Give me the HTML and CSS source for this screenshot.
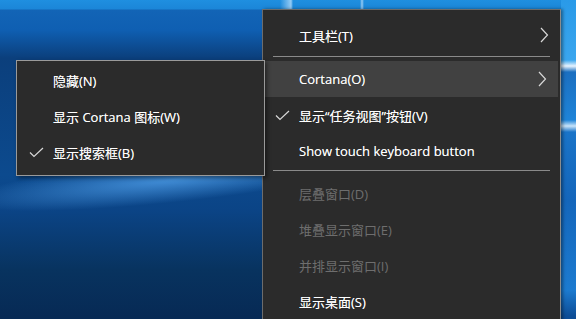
FILE: index.html
```html
<!DOCTYPE html>
<html lang="zh-CN">

<head>
    <meta charset="UTF-8">
    <title>任务栏菜单</title>
    <link rel="stylesheet" href="styles.css">
</head>

<body>
    <div class="desktop">
        <div class="glow"></div>
        <div class="edge"></div>

        <!-- main taskbar menu -->
        <ul class="menu main-menu">
            <li class="item">工具栏(T)
                <svg class="arrow" width="9" height="16" viewBox="0 0 9 16"><path d="M1 1 L7.5 8 L1 15" /></svg>
            </li>
            <li class="sep"></li>
            <li class="item active">Cortana(O)
                <svg class="arrow" width="9" height="16" viewBox="0 0 9 16"><path d="M1 1 L7.5 8 L1 15" /></svg>
            </li>
            <li class="item">
                <svg class="check" width="15" height="11" viewBox="0 0 15 11"><path d="M1 5.5 L5 9.5 L14 1" /></svg>
                显示“任务视图”按钮(V)
            </li>
            <li class="item">Show touch keyboard button</li>
            <li class="sep sep-low"></li>
            <li class="item off">层叠窗口(D)</li>
            <li class="item off">堆叠显示窗口(E)</li>
            <li class="item off">并排显示窗口(I)</li>
            <li class="item">显示桌面(S)</li>
        </ul>

        <!-- cortana submenu -->
        <ul class="menu sub-menu">
            <li class="item">隐藏(N)</li>
            <li class="item">显示 Cortana 图标(W)</li>
            <li class="item">
                <svg class="check" width="15" height="11" viewBox="0 0 15 11"><path d="M1 5.5 L5 9.5 L14 1" /></svg>
                显示搜索框(B)
            </li>
        </ul>
    </div>
</body>

</html>
```

FILE: styles.css
```css
* {
    box-sizing: border-box;
}

body {
    margin: 0;
    font-family: "Open Sans", "Noto Sans CJK SC", sans-serif;
    font-size: 13px;
    color: #fff;
    overflow: hidden;
}

ul {
    list-style: none;
    margin: 0;
    padding: 0;
}

.desktop {
    position: relative;
    width: 576px;
    height: 319px;
    overflow: hidden;
    background:
        linear-gradient(90deg, rgba(255, 255, 255, 0) 280px, rgba(200, 230, 255, 0.7) 291px, rgba(255, 255, 255, 0) 293px, rgba(255, 255, 255, 0) 360px, rgba(200, 230, 255, 0.7) 362px, rgba(255, 255, 255, 0) 364px) 0 0 / 100% 9px no-repeat,
        linear-gradient(180deg, #1f8fe0 0px, #1b86d8 9px, rgba(0, 0, 0, 0) 10px) 0 0 / 100% 100% no-repeat,
        linear-gradient(180deg, #1467b8 0px, #0f5fb2 30px, #0b3f7c 58px, #0c4a8e 175px, #0b4486 210px, #08335f 270px, #072a55 316px);
}

/* light streak across the wallpaper */
.glow {
    position: absolute;
    left: -40px;
    top: 160px;
    width: 360px;
    height: 46px;
    background: radial-gradient(ellipse at 60% 50%, rgba(80, 160, 235, 0.8), rgba(40, 110, 200, 0) 70%);
    transform: rotate(-6deg);
}

/* blue strip right of the main menu */
.edge {
    position: absolute;
    left: 561px;
    top: 0;
    width: 15px;
    height: 319px;
    background: linear-gradient(180deg, #2a9ae8 0px, #3aa6ee 60px, #e8f4ff 66px, #1b6fc0 72px, #1e84d8 120px, #c8e4fa 126px, #1a74c8 132px, #1466bb 200px, #1c7bd0 290px, #0d4d96 316px);
}

.menu {
    position: absolute;
    background: #2b2b2b;
}

.main-menu {
    left: 262px;
    top: 9px;
    width: 299px;
    height: 320px;
    padding-top: 7px;
    border: 1px solid #6c6c6c;
    border-right-color: #8c8c8c;
    box-shadow: 2px 0 3px rgba(0, 0, 0, 0.4);
}

.sub-menu {
    left: 16px;
    top: 60px;
    width: 249px;
    padding: 1px 0 5px;
    border: 1px solid #9a9a9a;
    box-shadow: 2px 2px 4px rgba(0, 0, 0, 0.45);
}

.item {
    position: relative;
    display: flex;
    align-items: center;
    height: 36px;
    padding-left: 36px;
    white-space: nowrap;
    text-shadow: 0 0 0.5px rgba(255, 255, 255, 0.6);
}

.item.active {
    background: #414141;
    margin-right: 2px;
}

.item.off {
    color: #6e6e6e;
    text-shadow: none;
}

.sep {
    height: 1px;
    margin: 3px 10px 4px;
    background: #8a8a8a;
}

.sep-low {
    margin: 1px 10px 4px;
}

.arrow {
    position: absolute;
    right: 11px;
    top: 10px;
}

.arrow path,
.check path {
    fill: none;
    stroke: #d8d8d8;
    stroke-width: 1.2;
}

.check {
    position: absolute;
    left: 12px;
    top: 13px;
}
```
